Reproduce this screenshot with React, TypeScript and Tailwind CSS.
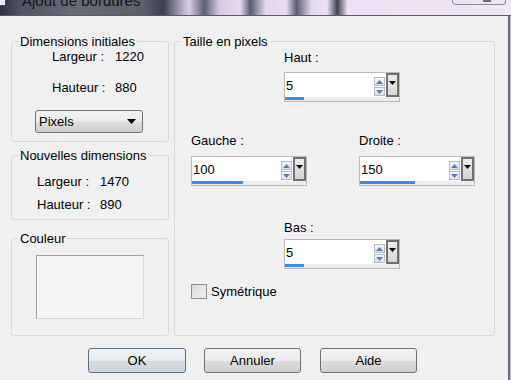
import React from "react";

const font = { fontFamily: '"Liberation Sans", Arial, sans-serif' };

function Tri({ color = "#000", w = 7, h = 4 }: { color?: string; w?: number; h?: number }) {
  return (
    <svg width={w} height={h} viewBox={`0 0 ${w} ${h}`}>
      <polygon points={`0,0 ${w},0 ${w / 2},${h}`} fill={color} />
    </svg>
  );
}

function SpinBtn({ up }: { up?: boolean }) {
  return (
    <div className="w-[11px] h-[9px] border border-[#b3bccb] bg-[linear-gradient(#f5f7fa,#dbe2ec)] flex items-center justify-center">
      <svg width="7" height="4" viewBox="0 0 7 4">
        {up ? (
          <polygon points="0,4 7,4 3.5,0" fill="#5b7cb8" />
        ) : (
          <polygon points="0,0 7,0 3.5,4" fill="#5b7cb8" />
        )}
      </svg>
    </div>
  );
}

function Spin({ value, fill }: { value: string; fill: number }) {
  return (
    <div className="w-[116px] border border-[#b9b9b9] bg-[#f2f2f2]">
      <div className="flex h-[24px]">
        <div className="flex-1 bg-white flex items-center pl-[1px] text-[13px] text-black">{value}</div>
        <div className="w-[12px] bg-white flex flex-col items-start justify-center gap-[1px] pt-[3px]">
          <SpinBtn up />
          <SpinBtn />
        </div>
        <div className="w-[13px] border-2 border-[#707070] bg-[linear-gradient(#ececec,#d6d6d6)] flex justify-center pt-[6px]">
          <Tri />
        </div>
      </div>
      <div className="h-[4px] bg-[#ececec] pt-[0px]">
        <div className="h-[3px] bg-[#3a8fe4]" style={{ width: fill }} />
      </div>
    </div>
  );
}

function Btn({ label, def }: { label: string; def?: boolean }) {
  return (
    <div
      className={
        "h-[25px] rounded-[3px] border flex items-center justify-center text-[13px] text-black " +
        (def
          ? "border-[#5d7184] bg-[linear-gradient(#f0f3f6_0%,#e6eaee_50%,#d6dce2_51%,#ccd3da_100%)]"
          : "border-[#707070] bg-[linear-gradient(#f2f2f2_0%,#ebebeb_50%,#dddddd_51%,#cfcfcf_100%)]")
      }
    >
      {label}
    </div>
  );
}

export default function App() {
  return (
    <div className="w-[511px] h-[380px] overflow-hidden bg-[#f0f0f0] text-[13px] text-black" style={font}>
      {/* title bar */}
      <div className="h-[15px] flex items-start overflow-hidden bg-[linear-gradient(90deg,#2c313c_0%,#4f5562_4%,#666b76_14%,#5b606b_28%,#3d4250_32%,#9c98b0_35%,#d9cde6_37%,#5f6072_40%,#d8cce4_43%,#e6daee_47%,#5a5c70_49%,#e2d6ec_52%,#e9ddf0_56%,#5c5e72_58%,#e6daee_61%,#ece0f2_64%,#3f4252_66%,#ede2f3_68%,#f1e6f6_100%)]">
        <div className="w-[6px] h-[6px] bg-[#e8eef8] border-r border-b border-[#2a4b8c] shrink-0" />
        <div className="ml-[16px] mt-[-7px] text-[15px] leading-[15px] text-[#151515] whitespace-nowrap">Ajout de bordures</div>
        <div className="ml-auto mr-[5px] w-[54px] h-[5px] border-x border-b border-[#8c8898] rounded-b-[4px] bg-[#efe4f3] flex justify-end pr-[14px]">
          <div className="w-[8px] h-[2px] bg-[#6b6b78]" />
        </div>
      </div>
      <div className="h-[1px] bg-[#5a5a6c]" />
      <div className="flex h-[364px]">
        <div className="w-[508px] bg-[#f0f0f0] pt-[18px] pl-[11px]">
          <div className="flex gap-[5px]">
            {/* left column */}
            <div className="w-[158px] flex flex-col">
              <fieldset className="border border-[#d5d9dd] rounded-[3px]">
                <legend className="ml-[6px] px-[2px] leading-[15px]">Dimensions initiales</legend>
                <div className="grid grid-cols-[63px_auto] gap-y-[16px] ml-[40px] leading-[15px]">
                  <span>Largeur :</span>
                  <span>1220</span>
                  <span>Hauteur :</span>
                  <span>880</span>
                </div>
                <div className="ml-[23px] mt-[15px] mb-[8px] w-[108px] h-[23px] rounded-[3px] border border-[#707070] bg-[linear-gradient(#f2f2f2_0%,#ebebeb_50%,#dddddd_51%,#cfcfcf_100%)] flex items-center justify-between pl-[3px] pr-[6px]">
                  <span>Pixels</span>
                  <Tri w={9} h={5} />
                </div>
              </fieldset>
              <fieldset className="mt-[6px] border border-[#d5d9dd] rounded-[3px]">
                <legend className="ml-[6px] px-[2px] leading-[15px]">Nouvelles dimensions</legend>
                <div className="grid grid-cols-[63px_auto] gap-y-[8px] ml-[25px] mt-[11px] mb-[7px] leading-[15px]">
                  <span>Largeur :</span>
                  <span>1470</span>
                  <span>Hauteur :</span>
                  <span>890</span>
                </div>
              </fieldset>
              <fieldset className="mt-[11px] border border-[#d5d9dd] rounded-[3px]">
                <legend className="ml-[6px] px-[2px] leading-[15px]">Couleur</legend>
                <div className="ml-[24px] mt-[9px] mb-[16px] w-[108px] h-[64px] border border-t-[#a0a0a0] border-l-[#a0a0a0] border-r-[#d6d6d6] border-b-[#d6d6d6] bg-[#f3f4f3]" />
              </fieldset>
            </div>
            {/* right column */}
            <fieldset className="w-[321px] h-[302px] border border-[#d5d9dd] rounded-[3px]">
              <legend className="ml-[6px] px-[2px] leading-[15px]">Taille en pixels</legend>
              <div className="flex flex-col leading-[15px]">
                <span className="ml-[109px] mt-[1px]">Haut :</span>
                <div className="ml-[109px] mt-[7px]">
                  <Spin value="5" fill={19} />
                </div>
                <div className="flex mt-[31px]">
                  <div className="ml-[16px] flex flex-col">
                    <span>Gauche :</span>
                    <div className="mt-[8px]">
                      <Spin value="100" fill={51} />
                    </div>
                  </div>
                  <div className="ml-[52px] flex flex-col">
                    <span>Droite :</span>
                    <div className="mt-[8px]">
                      <Spin value="150" fill={55} />
                    </div>
                  </div>
                </div>
                <span className="ml-[109px] mt-[34px]">Bas :</span>
                <div className="ml-[109px] mt-[4px]">
                  <Spin value="5" fill={19} />
                </div>
                <div className="ml-[16px] mt-[15px] flex items-center gap-[4px]">
                  <div className="w-[16px] h-[15px] border border-[#8e8f8f] bg-[linear-gradient(135deg,#d8d8d8,#f4f4f4)]" />
                  <span>Symétrique</span>
                </div>
              </div>
            </fieldset>
          </div>
          <div className="flex mt-[12px] ml-[77px]">
            <div className="w-[98px]">
              <Btn label="OK" def />
            </div>
            <div className="w-[97px] ml-[18px]">
              <Btn label="Annuler" />
            </div>
            <div className="w-[97px] ml-[19px]">
              <Btn label="Aide" />
            </div>
          </div>
        </div>
        <div className="w-[2px] bg-[#6c6c7e]" />
        <div className="w-[1px] bg-[#c8c4d4]" />
      </div>
    </div>
  );
}
